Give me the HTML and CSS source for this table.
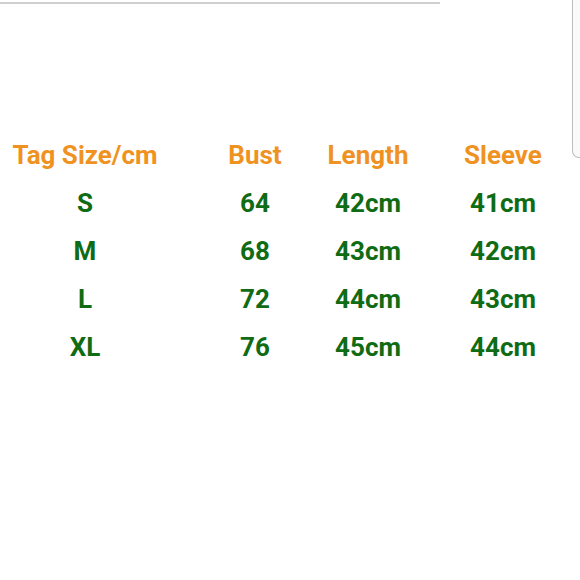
FILE: index.html
```html
<!DOCTYPE html>
<html>
<head>
<meta charset="utf-8">
<link rel="stylesheet" href="styles.css">
</head>
<body>
<div class="topline"></div>
<div class="edge"></div>
<div class="chart">
  <div class="cell head">Tag Size/cm</div>
  <div class="cell head">Bust</div>
  <div class="cell head">Length</div>
  <div class="cell head">Sleeve</div>

  <div class="cell">S</div>
  <div class="cell">64</div>
  <div class="cell">42cm</div>
  <div class="cell">41cm</div>

  <div class="cell">M</div>
  <div class="cell">68</div>
  <div class="cell">43cm</div>
  <div class="cell">42cm</div>

  <div class="cell">L</div>
  <div class="cell">72</div>
  <div class="cell">44cm</div>
  <div class="cell">43cm</div>

  <div class="cell">XL</div>
  <div class="cell">76</div>
  <div class="cell">45cm</div>
  <div class="cell">44cm</div>
</div>
</body>
</html>
```

FILE: styles.css
```css
html, body {
  margin: 0;
  padding: 0;
  background: #ffffff;
}
body {
  position: relative;
  width: 580px;
  height: 580px;
  overflow: hidden;
  font-family: Roboto, "Liberation Sans", sans-serif;
}
.topline {
  margin-top: 2px;
  width: 440px;
  height: 2px;
  background: #d0d0d0;
}
.edge {
  position: absolute;
  top: 0;
  right: 0;
  width: 7px;
  height: 157px;
  background: #fafafa;
  border-left: 1px solid #bdbdbd;
  border-bottom: 1px solid #bdbdbd;
  border-bottom-left-radius: 7px;
}
.chart {
  margin-top: 127px;
  display: grid;
  grid-template-columns: 170px 170px 56px 214px;
  grid-auto-rows: 48px;
  justify-items: center;
  align-items: center;
}
.cell {
  font-size: 26px;
  font-weight: 700;
  line-height: 48px;
  white-space: nowrap;
  color: #0f6b14;
}
.cell.head {
  color: #f0921f;
}
```
